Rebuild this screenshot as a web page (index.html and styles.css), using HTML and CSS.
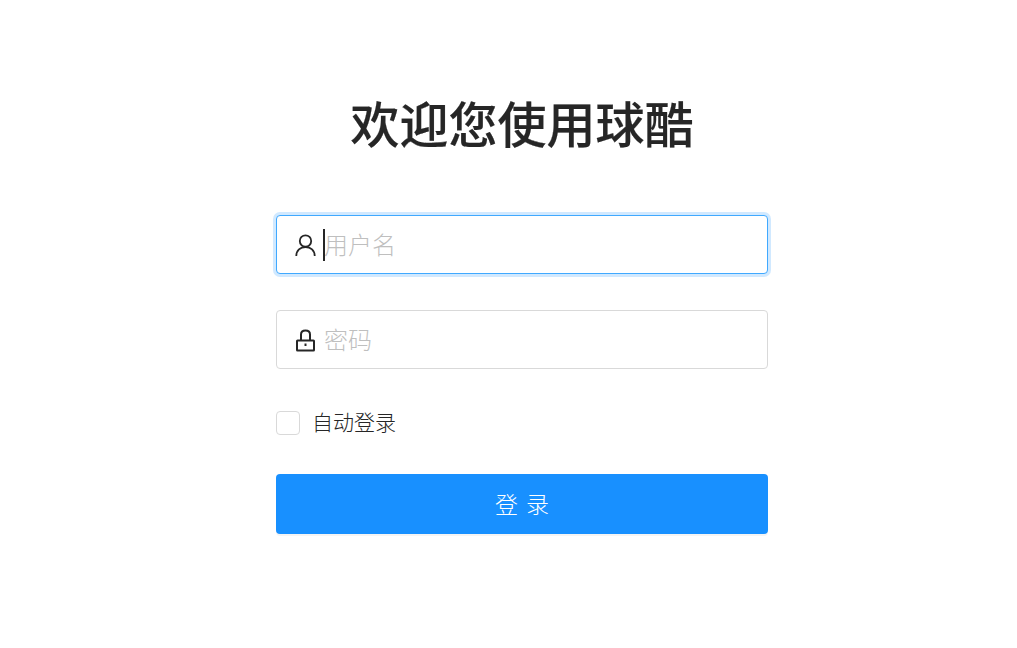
FILE: index.html
```html
<!DOCTYPE html>
<html lang="zh-CN">
<head>
<meta charset="utf-8">
<title>登录</title>
<link rel="stylesheet" href="styles.css">
</head>
<body>
<main class="login">
  <h1 class="title">欢迎您使用球酷</h1>
  <form class="form">
    <div class="field field-focused">
      <svg class="icon" viewBox="0 0 24 24" fill="none" stroke="#262626" stroke-width="1.800"><circle cx="11.500" cy="8" r="5.700"/><path d="M2.300 23c0-5.500 4-9 9.200-9s9.200 3.500 9.200 9"/></svg>
      <span class="input-wrap"><span class="caret"></span><input class="input" type="text" placeholder="用户名"></span>
    </div>
    <div class="field">
      <svg class="icon" viewBox="0 0 24 24" fill="none" stroke="#262626" stroke-width="2"><rect x="3" y="12.500" width="17" height="10" rx="0.500"/><path d="M7 12.500V6.500C7 3.500 9 2.500 11.500 2.500S16 3.500 16 6.500V12.500"/><path d="M11.500 15.500V18"/></svg>
      <span class="input-wrap"><input class="input" type="password" placeholder="密码"></span>
    </div>
    <label class="remember"><span class="check"></span><span class="remember-text">自动登录</span></label>
    <button class="submit" type="button">登 录</button>
  </form>
</main>
</body>
</html>
```
FILE: styles.css
```css
* { box-sizing: border-box; }
html, body { margin: 0; height: 100%; background: #fff; }
body { font-family: "Noto Sans CJK SC", "Noto Sans", sans-serif; color: #262626; }
.login { width: 492px; margin-left: 276px; padding-top: 86px; }
.title { margin: 0 0 58px; height: 71px; line-height: 71px; font-size: 49px; font-weight: 500; -webkit-text-stroke: 0.2px #262626; text-align: center; color: #262626; }
.form { display: flex; flex-direction: column; }
.field { display: flex; align-items: center; height: 59px; margin-bottom: 36px; padding: 0 17px; border: 1px solid #d9d9d9; border-radius: 4px; background: #fff; }
.field-focused { border-color: #40a9ff; box-shadow: 0 0 0 3px rgba(24, 144, 255, 0.2); }
.icon { width: 24px; height: 24px; flex: none; }
.input-wrap { position: relative; flex: 1; margin-left: 6px; display: flex; }
.input { width: 100%; border: 0; outline: 0; padding: 0 0 3px; height: 30px; font: inherit; font-size: 24px; line-height: 27px; color: #262626; background: transparent; }
.input::placeholder { color: #bfbfbf; opacity: 1; font-weight: 300; }
.caret { position: absolute; left: -1px; top: -0.5px; width: 2px; height: 32px; background: #262626; }
.remember { display: flex; align-items: center; height: 24px; margin-top: 6px; margin-bottom: 39px; }
.check { width: 24px; height: 24px; border: 1px solid #d9d9d9; border-radius: 4px; background: #fff; }
.remember-text { margin-left: 12px; padding-bottom: 4px; font-size: 21px; line-height: 22px; font-weight: 300; color: #262626; }
.submit { height: 60px; border: 0; border-radius: 4px; background: #1890ff; color: #fff; font: inherit; font-size: 23px; font-weight: 300; word-spacing: 3px; box-shadow: 0 2px 0 rgba(0, 0, 0, 0.045); padding: 0 0 2px; }
```
